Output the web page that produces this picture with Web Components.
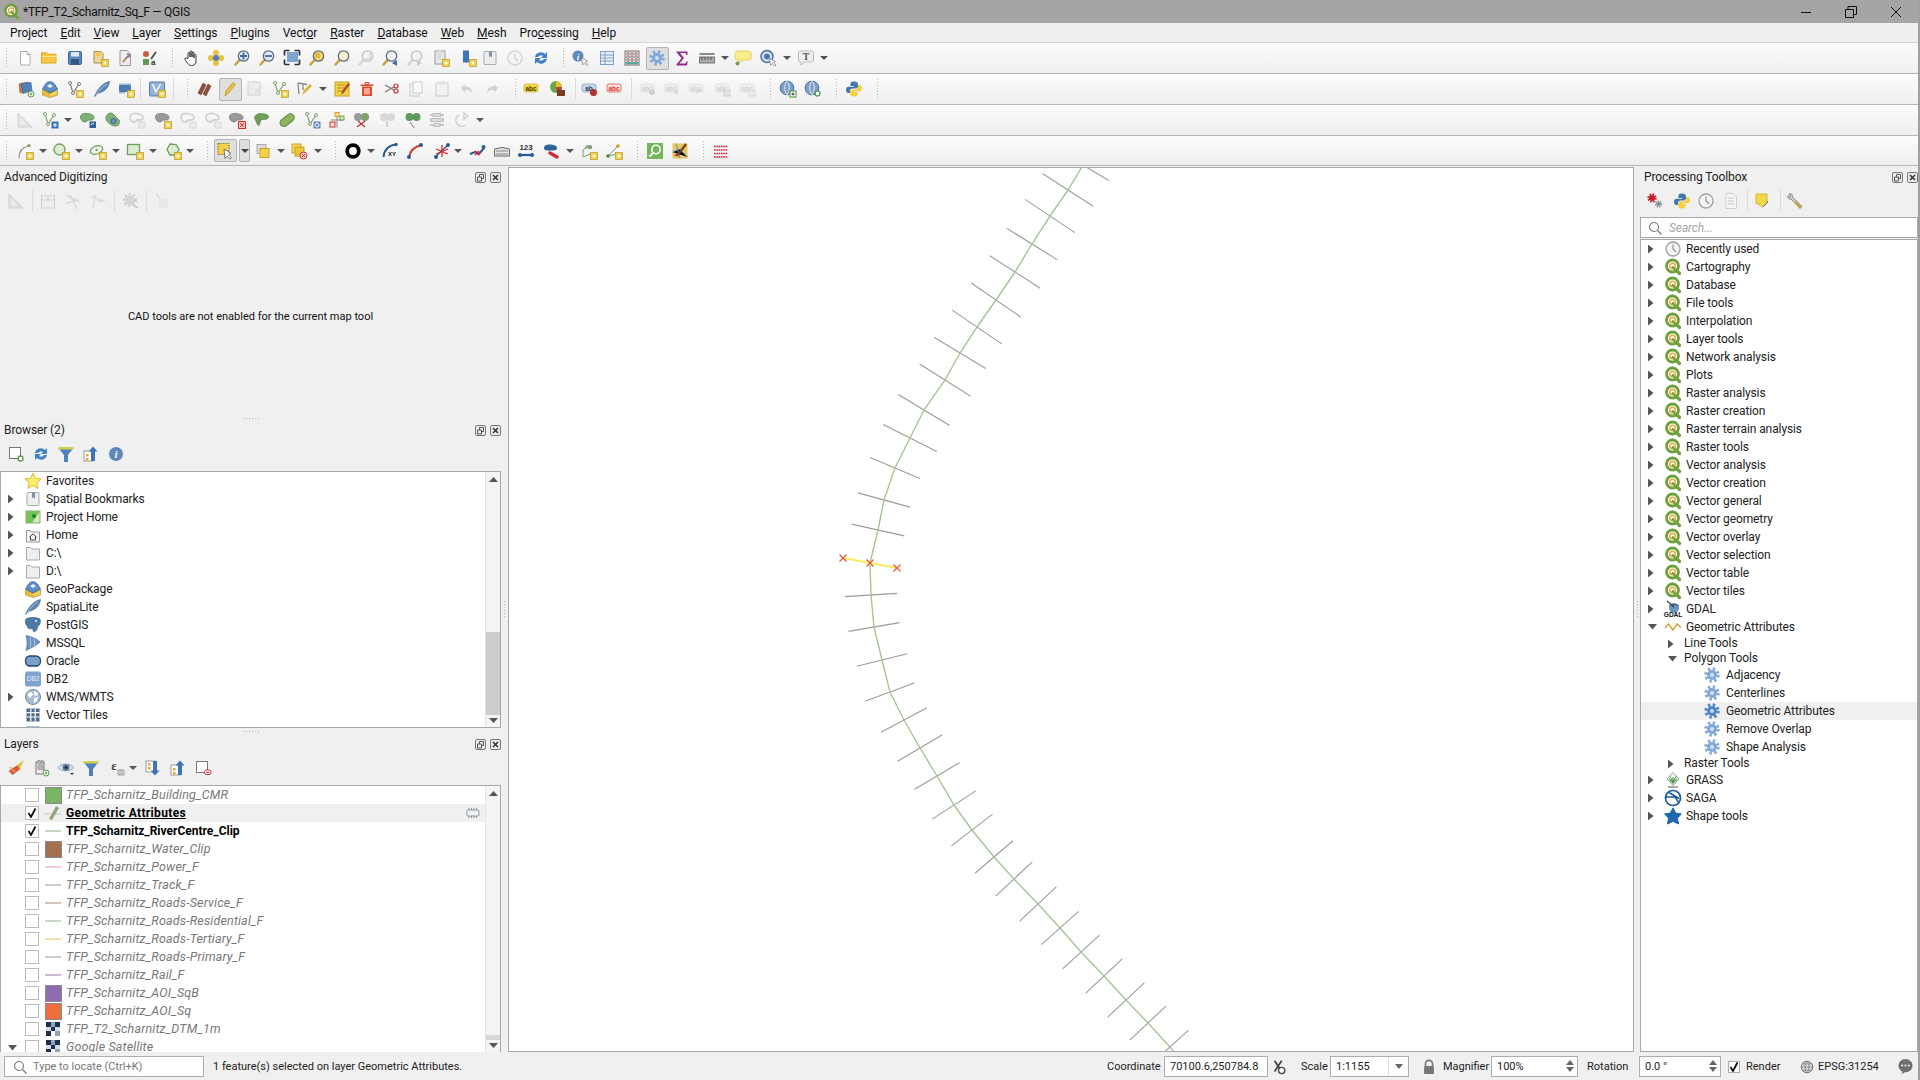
<!DOCTYPE html>
<html>
<head>
<meta charset="utf-8">
<title>QGIS</title>
<style>
  html, body { margin: 0; padding: 0; }
  body {
    width: 1920px; height: 1080px; overflow: hidden; box-sizing: border-box;
    border-right: 2px solid #a0a0a0; background: #f0f0f0; color: #111;
    display: flex; flex-direction: column;
    font: 12px/18px Roboto, "Noto Sans", sans-serif; letter-spacing: -.1px;
  }
  .main { display: flex; height: 886px; }
  .left { width: 501px; display: flex; flex-direction: column; }
  .right { width: 278px; display: flex; flex-direction: column; }
</style>
</head>
<body>
<q-titlebar>*TFP_T2_Scharnitz_Sq_F — QGIS</q-titlebar>
<q-menubar>
  <span>Pro<u>j</u>ect</span><span><u>E</u>dit</span><span><u>V</u>iew</span><span><u>L</u>ayer</span><span><u>S</u>ettings</span><span><u>P</u>lugins</span><span>Vect<u>o</u>r</span><span><u>R</u>aster</span><span><u>D</u>atabase</span><span><u>W</u>eb</span><span><u>M</u>esh</span><span>Pro<u>c</u>essing</span><span><u>H</u>elp</span>
</q-menubar>
<q-toolbar items="grip@6 new@25 open@49 save@75 saveas@100 props@125 style@150 grip@172 hand@191 pansel@216 zoomin@242 zoomout@267 zoomfull@292 zoomlayer@317 zoomsel@342 zoomlast!@366 zoomback@390 zoomnat!@415 bmkgroup@441 bmknew@468 bmk@490 clock!@515 refresh@541 grip@563 identify@580 table@607 calc@632 gear*@657 sigma@682 measure@707 drop@725 tip@743 findloc@768 drop@787 ttext@806 drop@824"></q-toolbar>
<q-toolbar items="grip@6 layers@26 gpkg@50 vnew@75 featherb@102 chip@126 sep@140 virt@157 sep@173 grip@187 pens@205 pencil*@230 savepen!@255 vadd@280 vtool@305 drop@323 note@342 trash@367 scissors@392 copy!@416 paste!@442 undo!@467 redo!@492 grip@515 abcy@532 pie@558 sep@575 abcpin@590 abcr@615 sep@631 abcg1!@648 abcg2!@672 abcg3!@697 abcg4!@723 abcg5!@748 grip@770 globeadd@788 globefind@813 grip@836 python@854 grip@877"></q-toolbar>
<q-toolbar items="grip@6 ruler!@25 vmove@50 drop@68 gblob1@88 gblob2@113 ring!@137 gblob3@163 ring!@188 ring!@213 rblob@237 gfill@262 pill@287 vcopy@312 split@337 rsplit@362 gsplit!@388 merge@413 align@437 redo2!@463 drop@480"></q-toolbar>
<q-toolbar style="height:29px" items="grip@6 curve@25 drop@43 circ@61 drop@79 ellipse@98 drop@116 rect@135 drop@153 regpoly@173 drop@190 grip@207 select*@225 dropb@244 selvals@263 drop@281 deselect@299 drop@318 grip@335 ringblack@353 drop@371 arcxy@390 arcred@415 cross@442 drop@458 splitred@477 road@502 n123@526 reshape@552 drop@570 labeln@589 labelm@614 grip@637 mapsearch@655 osm@680 grip@703 dash@721"></q-toolbar>

<div class="main">
  <div class="left">
    <q-dock-title style="height:21px;padding-top:1px">Advanced Digitizing</q-dock-title>
    <q-toolbar flat items="ruler!@16 sep@32 cadbox!@48 cadlines!@72 cadang!@98 sep@114 cadgear!@131 sep@146 cadpt!@162"></q-toolbar>
    <q-message>CAD tools are not enabled for the current map tool</q-message>
    <q-handle h="4"></q-handle>
    <q-dock-title style="height:21px">Browser (2)</q-dock-title>
    <q-toolbar flat items="addsq@16 refresh@41 funnel@66 collapse@91 info@116"></q-toolbar>
    <q-tree style="height:257px;margin-top:4px" thumb-top="160" thumb-height="83" thumb-tone="dark">
      <q-row text="45" icon="star">Favorites</q-row>
      <q-row text="45" arrow="right" icon="bmk">Spatial Bookmarks</q-row>
      <q-row text="45" arrow="right" icon="prjhome">Project Home</q-row>
      <q-row text="45" arrow="right" icon="home">Home</q-row>
      <q-row text="45" arrow="right" icon="folder">C:\</q-row>
      <q-row text="45" arrow="right" icon="folder">D:\</q-row>
      <q-row text="45" icon="gpkg">GeoPackage</q-row>
      <q-row text="45" icon="featherb">SpatiaLite</q-row>
      <q-row text="45" icon="elephant">PostGIS</q-row>
      <q-row text="45" icon="mssql">MSSQL</q-row>
      <q-row text="45" icon="oracle">Oracle</q-row>
      <q-row text="45" icon="db2">DB2</q-row>
      <q-row text="45" arrow="right" icon="wms">WMS/WMTS</q-row>
      <q-row text="45" icon="grid">Vector Tiles</q-row>
      <q-row text="45" icon="grid"></q-row>
    </q-tree>
    <q-handle h="6"></q-handle>
    <q-dock-title style="height:21px">Layers</q-dock-title>
    <q-toolbar flat items="styles@16 addgroup@41 eye@66 funnel@91 epsilon@117 drop@133 expand@153 collapse@178 remove@203"></q-toolbar>
    <q-tree style="height:268px;margin-top:4px" thumb-top="249" thumb-height="5" thumb-tone="line">
      <q-layer swatch="#79b564" off>TFP_Scharnitz_Building_CMR</q-layer>
      <q-layer line="#8db26a" on selected indicator current>Geometric Attributes</q-layer>
      <q-layer line="#c5d8ba" on>TFP_Scharnitz_RiverCentre_Clip</q-layer>
      <q-layer swatch="#a3714f" off>TFP_Scharnitz_Water_Clip</q-layer>
      <q-layer line="#f2cdd7" off>TFP_Scharnitz_Power_F</q-layer>
      <q-layer line="#cfcbd4" off>TFP_Scharnitz_Track_F</q-layer>
      <q-layer line="#d6bfbb" off>TFP_Scharnitz_Roads-Service_F</q-layer>
      <q-layer line="#c7dac6" off>TFP_Scharnitz_Roads-Residential_F</q-layer>
      <q-layer line="#f0e2a8" off>TFP_Scharnitz_Roads-Tertiary_F</q-layer>
      <q-layer line="#c9ced5" off>TFP_Scharnitz_Roads-Primary_F</q-layer>
      <q-layer line="#cbbbd2" off>TFP_Scharnitz_Rail_F</q-layer>
      <q-layer swatch="#8f6bb0" off>TFP_Scharnitz_AOI_SqB</q-layer>
      <q-layer swatch="#ec6e3d" off>TFP_Scharnitz_AOI_Sq</q-layer>
      <q-layer raster off>TFP_T2_Scharnitz_DTM_1m</q-layer>
      <q-layer raster off expanded>Google Satellite</q-layer>
    </q-tree>
  </div>
  <q-vhandle></q-vhandle>
  <q-map></q-map>
  <q-vhandle style="width:6px"></q-vhandle>
  <div class="right">
    <q-dock-title edge style="height:21px;padding-top:1px">Processing Toolbox</q-dock-title>
    <q-toolbar flat items="procmodel@15 python@42 clock@66 doc!@91 sep@107 tag@123 sep@140 wrench@155"></q-toolbar>
    <q-search>Search...</q-search>
    <q-tree noscroll style="height:813px;width:278px">
      <q-row pad="11" text="45" arrow="right" icon="clock">Recently used</q-row>
      <q-row pad="11" text="45" arrow="right" icon="q">Cartography</q-row>
      <q-row pad="11" text="45" arrow="right" icon="q">Database</q-row>
      <q-row pad="11" text="45" arrow="right" icon="q">File tools</q-row>
      <q-row pad="11" text="45" arrow="right" icon="q">Interpolation</q-row>
      <q-row pad="11" text="45" arrow="right" icon="q">Layer tools</q-row>
      <q-row pad="11" text="45" arrow="right" icon="q">Network analysis</q-row>
      <q-row pad="11" text="45" arrow="right" icon="q">Plots</q-row>
      <q-row pad="11" text="45" arrow="right" icon="q">Raster analysis</q-row>
      <q-row pad="11" text="45" arrow="right" icon="q">Raster creation</q-row>
      <q-row pad="11" text="45" arrow="right" icon="q">Raster terrain analysis</q-row>
      <q-row pad="11" text="45" arrow="right" icon="q">Raster tools</q-row>
      <q-row pad="11" text="45" arrow="right" icon="q">Vector analysis</q-row>
      <q-row pad="11" text="45" arrow="right" icon="q">Vector creation</q-row>
      <q-row pad="11" text="45" arrow="right" icon="q">Vector general</q-row>
      <q-row pad="11" text="45" arrow="right" icon="q">Vector geometry</q-row>
      <q-row pad="11" text="45" arrow="right" icon="q">Vector overlay</q-row>
      <q-row pad="11" text="45" arrow="right" icon="q">Vector selection</q-row>
      <q-row pad="11" text="45" arrow="right" icon="q">Vector table</q-row>
      <q-row pad="11" text="45" arrow="right" icon="q">Vector tiles</q-row>
      <q-row pad="11" text="45" arrow="right" icon="gdal">GDAL</q-row>
      <q-row pad="11" text="45" arrow="down" icon="wave">Geometric Attributes</q-row>
      <q-row h="15" pad="31" text="43" arrow="right">Line Tools</q-row>
      <q-row h="15" pad="31" text="43" arrow="down">Polygon Tools</q-row>
      <q-row pad="71" text="85" icon="gear">Adjacency</q-row>
      <q-row pad="71" text="85" icon="gear">Centerlines</q-row>
      <q-row pad="71" text="85" icon="gearsel" selected>Geometric Attributes</q-row>
      <q-row pad="71" text="85" icon="gear">Remove Overlap</q-row>
      <q-row pad="71" text="85" icon="gear">Shape Analysis</q-row>
      <q-row h="15" pad="31" text="43" arrow="right">Raster Tools</q-row>
      <q-row pad="11" text="45" arrow="right" icon="grass">GRASS</q-row>
      <q-row pad="11" text="45" arrow="right" icon="saga">SAGA</q-row>
      <q-row pad="11" text="45" arrow="right" icon="shapes">Shape tools</q-row>
    </q-tree>
  </div>
</div>

<q-statusbar></q-statusbar>

<script>
const BADGE = '<rect x="10.5" y="10.5" width="7" height="7" fill="#f3d24a" stroke="#b8982e" stroke-width=".7"/><path d="M14 11.8l.6 1.4 1.5.1-1.1 1 .3 1.4-1.3-.7-1.3.7.3-1.4-1.1-1 1.5-.1z" fill="#fff"/>'
const mag = (fill, extra = '') => `<path d="M6.5 11L2.5 15.5" stroke="#c8a03a" stroke-width="2.4" stroke-linecap="round"/><circle cx="10.5" cy="7" r="5.2" fill="${fill}" stroke="#5d6d7d" stroke-width="1.3"/>${extra}`
const vee = (c) => `<path d="M4 3l3 10 6-9" fill="none" stroke="${c}" stroke-width="1.1"/><circle cx="4" cy="3" r="1.5" fill="#fff" stroke="${c}"/><circle cx="7" cy="13" r="1.5" fill="#fff" stroke="${c}"/><circle cx="13" cy="4" r="1.5" fill="#fff" stroke="${c}"/>`
const blob = (c, s) => `<path d="M1.5 6c0-3 3.5-4 6.5-3.5s7 1 7 4-3 2.5-5 2.5-2 2-4 2-4.5-2-4.5-5z" fill="${c}" stroke="${s}" stroke-width=".8"/>`
const ringb = '<path d="M2 6c0-3 3.5-4 6.5-3.5s6.5 1 6.5 4-3 2.5-5 2.5-2 2-4 2-4-2-4-5z" fill="none" stroke="#999" stroke-width="1.8"/><rect x="11" y="11" width="6" height="6" fill="#ddd" stroke="#aaa"/>'
const abc = (bg, bd, fg, txt = 'abc') => `<rect x="1" y="4" width="14" height="8" rx="2" fill="${bg}" stroke="${bd}" stroke-width=".8"/><text x="8" y="10.6" font-size="6.5" font-weight="700" text-anchor="middle" font-family="Liberation Sans" fill="${fg}">${txt}</text>`
const abcg = (extra) => abc('#e4e4e4', '#bbb', '#999') + extra
const page = '<path d="M4 1.5h7l3.5 3.5v11.5H4z" fill="#fff" stroke="#999"/>'
const globe = (extra) => `<circle cx="8" cy="8" r="6.8" fill="#7b9fc8" stroke="#456a94"/><path d="M8 1.2c-3 3-3 10 0 13.6M8 1.2c3 3 3 10 0 13.6" fill="none" stroke="#e8eef5"/>${extra}`

const ICONS = {
  new: '<path d="M4.5 2.5H11l3 3V16H4.5z" fill="#fff" stroke="#aaa"/><path d="M11 2.5v3h3" fill="#eee" stroke="#aaa"/>',
  open: '<path d="M1.5 5V3.800h5L8 5.200h8V14H1.5z" fill="#f6c945" stroke="#dba726"/><path d="M1.5 7.5h15" stroke="#fbe08d"/>',
  save: '<rect x="2.5" y="2.5" width="13" height="13" rx="1.5" fill="#5d88bd" stroke="#3f6a9e"/><rect x="5" y="3" width="8" height="4.5" fill="#dfe8f2"/><rect x="5" y="10" width="8" height="5.5" fill="#34577f"/>',
  saveas: '<path d="M3 2.5h7l2 2V14H3z" fill="#ead99f" stroke="#a98f49"/><rect x="5" y="4" width="4" height="3" fill="#f7c23a"/>' + BADGE,
  props: page.replace('#fff', '#eee') + '<path d="M7 13l5-6M11 5l2.5 1-1 2.5" stroke="#777" stroke-width="1.5" fill="none"/><path d="M7 13l2-3" stroke="#c9a33a" stroke-width="2"/>',
  style: '<circle cx="5" cy="5" r="3" fill="#d05a3c"/><rect x="2" y="10" width="6" height="6" fill="#5d9b55"/><path d="M10 10l5-7" stroke="#555" stroke-width="2"/><text x="10" y="16" font-size="8" font-family="Liberation Sans" fill="#333">a</text>',
  hand: '<path d="M6 9.5v-5a1 1 0 012 0V8 3a1 1 0 012 0v5-4a1 1 0 012 0v5-2.5a1 1 0 012 0V12c0 3-1.8 4.5-4.5 4.5-2.5 0-3.5-1.5-4.5-3L3 10.5c-.7-1.200.9-2.200 1.800-1.200z" fill="#fff" stroke="#222" stroke-width=".9"/>',
  pansel: '<circle cx="9" cy="4" r="3" fill="#e7c23c"/><circle cx="9" cy="14" r="3" fill="#e7c23c"/><circle cx="4" cy="9" r="3" fill="#e7c23c"/><circle cx="14" cy="9" r="3" fill="#e7c23c"/><circle cx="9" cy="9" r="3" fill="#4f7fb4"/>',
  zoomin: mag('#dfe8f2', '<path d="M10.5 3.500v7M7 7h7" stroke="#3c6aa5" stroke-width="1.8"/>'),
  zoomout: mag('#dfe8f2', '<path d="M7 7h7" stroke="#3c6aa5" stroke-width="1.8"/>'),
  zoomfull: '<rect x="4" y="3" width="11" height="10" fill="#7fa3cf"/><path d="M1.500 1.500h5M1.500 1.500v5M16.500 1.500h-5M16.500 1.500v5M1.500 15.500h5M1.500 15.500v-5M16.500 15.500h-5M16.500 15.500v-5" stroke="#2a3440" stroke-width="1.7"/>',
  zoomlayer: mag('#f0d672', '<path d="M7 4h5v5H7z" fill="#e4b93a"/>'),
  zoomsel: mag('#f6f0ce'),
  zoomlast: mag('#eee', '<path d="M13 4v6H8" fill="none" stroke="#888"/>'),
  zoomback: mag('#eef2f7', '<path d="M16 11l-5 3 5 3z" fill="#3c6aa5"/>'),
  zoomnat: mag('#eee', '<path d="M11 11l5 3-5 3z" fill="#888"/>'),
  bmkgroup: '<rect x="3" y="2" width="10" height="13" fill="#e9e9e9" stroke="#999"/><path d="M5 2h5v9H5z" fill="#ddd"/>' + BADGE,
  bmknew: '<path d="M4 1.500h6v12H4z" fill="#3f73b5"/>' + BADGE,
  bmk: '<rect x="3" y="2.5" width="12" height="13" rx="1" fill="#eee" stroke="#aaa"/><path d="M8 2.500h3v6L9.500 7 8 8.500z" fill="#7c90a9"/>',
  clock: '<circle cx="9" cy="9" r="7" fill="#f4f4f4" stroke="#a0a0a0" stroke-width="1.3"/><path d="M9 4.500V9l3 3" fill="none" stroke="#8f8f8f" stroke-width="1.2"/>',
  refresh: '<path d="M3 8a6 6 0 0110-3l2-2v6H9l2-2a3.500 3.500 0 00-5 1zM15 10a6 6 0 01-10 3l-2 2V9h6l-2 2a3.500 3.500 0 005-1z" fill="#3f80c6"/>',
  identify: '<circle cx="7" cy="7" r="5.5" fill="#5c88ba"/><text x="7" y="10.6" font-size="9" font-weight="700" font-style="italic" text-anchor="middle" font-family="Liberation Serif" fill="#fff">i</text><path d="M10.500 9l1 7 1.800-2 2.700 2.500 1-1-2.500-2.500 2-1z" fill="#fff" stroke="#777" stroke-width=".7"/>',
  table: '<rect x="2.5" y="2.5" width="13" height="13" fill="#e9f0f8" stroke="#7fa0c5"/><path d="M2.500 6h13M2.500 9h13M2.500 12h13M7 2.500v13" stroke="#7fa0c5"/>',
  calc: '<rect x="2" y="2" width="14" height="14" fill="#ddd" stroke="#777"/><path d="M3 5h12M3 8h12M3 11h12" stroke="#888"/><path d="M5 3v11M9 3v11M13 3v11" stroke="#c44" stroke-dasharray="1.5 1.5"/><path d="M3 14h12" stroke="#5a9" stroke-width="2"/>',
  gear: '<circle cx="9" cy="9" r="6.2" fill="none" stroke="#7fa7d8" stroke-width="3" stroke-dasharray="2.4 2.47"/><circle cx="9" cy="9" r="5" fill="#7fa7d8"/><circle cx="9" cy="9" r="2" fill="#d6e2f2"/>',
  gearsel: '<circle cx="9" cy="9" r="6.2" fill="none" stroke="#4f84c6" stroke-width="3" stroke-dasharray="2.4 2.47"/><circle cx="9" cy="9" r="5" fill="#4f84c6"/><circle cx="9" cy="9" r="2" fill="#c7d9ef"/>',
  sigma: '<path d="M3.500 2.500h11V6h-1l-1-2H7l4 5-4.500 5.500h6l1.200-2.300h1L14 16.500H3.500v-1l5-6.200-5-6z" fill="#93278f"/>',
  measure: '<path d="M1.500 5h15" stroke="#666" stroke-width="1.5"/><rect x="1.5" y="8" width="15" height="6" fill="#aaa" stroke="#777"/><path d="M4 8v3M7 8v3M10 8v3M13 8v3" stroke="#555"/>',
  tip: '<path d="M3.500 2h11A2.500 2.500 0 0117 4.500v4a2.500 2.500 0 01-2.500 2.500H9l-4 3v-3H3.500A2.500 2.500 0 011 8.500v-4A2.500 2.500 0 013.500 2z" fill="#fbee8a" stroke="#e1d26b"/><circle cx="3.5" cy="14.5" r="2" fill="#7b9a53"/>',
  findloc: '<circle cx="8" cy="7.5" r="6" fill="#cfdbe9" stroke="#4f709b" stroke-width="1.5"/><circle cx="8" cy="7.5" r="2.8" fill="#3e75b3"/><path d="M10.500 9.500l1 7 1.800-2 2.700 2.500 1-1-2.500-2.500 2-1z" fill="#fff" stroke="#777" stroke-width=".7"/>',
  ttext: '<path d="M3.500 2h11a2 2 0 012 2v7a2 2 0 01-2 2H8l-4 3v-3h-.5a2 2 0 01-2-2V4a2 2 0 012-2z" fill="#eee" stroke="#bbb"/><text x="9" y="11" font-size="10" font-weight="700" text-anchor="middle" font-family="Liberation Serif" fill="#555">T</text>',
  layers: '<path d="M2 4l9-2 1 9-9 2z" fill="#d9783a" stroke="#a2521f" stroke-width=".6"/><path d="M4 3.500l10-1 1 8-9 3z" fill="#4f7fb4" stroke="#345f90" stroke-width=".6"/><circle cx="14" cy="14" r="3" fill="#fff" stroke="#5a9a4a"/><path d="M12.500 14h3M14 12.500v3" stroke="#5a9a4a"/>',
  gpkg: '<path d="M1.500 9.500L9 13l7.500-3.500V15L9 17.500 1.500 15z" fill="#f2cf55" stroke="#927a22" stroke-width=".6"/><path d="M1.500 9.500L9 13v4.500L1.500 15z" fill="#e8b83a"/><path d="M1.500 9l3-5a5.500 5.500 0 019 0l3 5L9 13z" fill="#5d8fc4" stroke="#2e5a8c" stroke-width=".7"/><path d="M6 6l3-2 3 2-3 2z" fill="#e9eef5"/>',
  vnew: vee('#777') + BADGE,
  featherb: '<path d="M1.500 16.500C4 10 9 3 16.500 1.500 16 7 12 12 5.500 13z" fill="#5c88ba" stroke="#3a618e" stroke-width=".6"/><path d="M3 15C6 10 10 6 14 4" stroke="#d5e2f0" stroke-width=".6" fill="none"/>',
  chip: '<rect x="2" y="5" width="12" height="7" rx="1" fill="#4b7db4"/><path d="M3 3.500v2M5 3.500v2M7 3.500v2M9 3.500v2M11 3.500v2M13 3.500v2M3 12v1.500M5 12v1.500M7 12v1.500" stroke="#4b7db4"/>' + BADGE,
  virt: '<rect x="1.5" y="2" width="15" height="14" rx="1" fill="#94b3d6" stroke="#557ca8"/><path d="M4.500 4L8 12l4.500-8" fill="none" stroke="#fff" stroke-width="1.3"/>' + BADGE,
  pens: '<path d="M2 13L7 3l3 2-5 10zM7 14l5-10 3 2-5 10z" fill="#8f4f3c" stroke="#5c3022" stroke-width=".5"/>',
  pencil: '<path d="M4 16l1-5 7-8.500 2.500 2L7.500 13z" fill="#e8c23a" stroke="#b48f1f" stroke-width=".7"/>',
  savepen: '<rect x="2" y="2" width="12" height="13" fill="#ddd" stroke="#999"/><path d="M8 15l1-4 6-5 1.500 1.500-6 5z" fill="#bbb"/>',
  vadd: vee('#7d9e6a') + BADGE,
  vtool: '<path d="M2 3l9 1.500M2 3l1 11M7 4v6" stroke="#888" stroke-width="1.3" fill="none"/><path d="M6 15l2-5 6-6 2 2-6 6z" fill="#d9b43a"/>',
  note: '<rect x="2" y="2" width="14" height="14" fill="#f3d24a" stroke="#c7a224"/><path d="M4 5h8M4 8h8M4 11h5" stroke="#b08f1d"/><path d="M8 15l1-4 6-8 2 1.500-6 8z" fill="#c0432d"/>',
  trash: '<path d="M2.500 4.500h13V6h-13z" fill="#e04b2b"/><path d="M7 2.500h4v2H7z" fill="none" stroke="#e04b2b"/><path d="M4 6.500h10V16H4z" fill="#e04b2b"/><path d="M7 8v6.500M9 8v6.500M11 8v6.500" stroke="#fff"/>',
  scissors: '<path d="M2 5l9 5M2 12l9-5" stroke="#777" stroke-width="1.2"/><circle cx="13" cy="6" r="2" fill="none" stroke="#c23b32" stroke-width="1.2"/><circle cx="13" cy="11" r="2" fill="none" stroke="#c23b32" stroke-width="1.2"/>',
  copy: '<rect x="3" y="4" width="9" height="12" fill="#eee" stroke="#888"/><rect x="6" y="2" width="9" height="11" fill="#fff" stroke="#888"/>',
  paste: '<rect x="3" y="3" width="12" height="13" fill="#eee" stroke="#888"/><rect x="6" y="1.5" width="6" height="3" fill="#bbb"/>',
  undo: '<path d="M3 8l4-4v2.500c4 0 7 1.500 7 6.500-1.500-2.500-3.500-3-7-3V13z" fill="#999"/>',
  redo: '<path d="M15 8l-4-4v2.500c-4 0-7 1.500-7 6.500 1.500-2.500 3.500-3 7-3V13z" fill="#999"/>',
  abcy: abc('#f5d84a', '#d4b62f', '#443a00'),
  pie: '<circle cx="7" cy="7" r="6" fill="#6aa84f"/><path d="M7 7V1a6 6 0 016 6z" fill="#e8c12d"/><path d="M7 7h6a6 6 0 01-5 6z" fill="#c23b32"/><rect x="8" y="10" width="8" height="6" fill="#7a3b1e"/>',
  abcpin: abc('#c7d6e9', '#88a3c4', '#26405f', 'ab') + '<circle cx="12.5" cy="12.5" r="3.5" fill="#b5302b"/>',
  abcr: abc('#fbe4df', '#df5a50', '#d0352c'),
  abcg1: abcg('<circle cx="13" cy="12" r="3" fill="#999"/>'),
  abcg2: abcg('<path d="M11 10h4v4h-4z" fill="#aaa"/>'),
  abcg3: abcg('<path d="M9 13a3 3 0 015-2" stroke="#999" stroke-width="1.5" fill="none"/>'),
  abcg4: abcg('<rect x="10" y="10" width="6" height="6" fill="#ccc" stroke="#999"/>'),
  abcg5: abcg('<rect x="10" y="10" width="6" height="6" fill="#ddd" stroke="#aaa"/>'),
  globeadd: globe('<rect x="11" y="11" width="6" height="6" fill="#fff" stroke="#4a8a3a"/><path d="M12.500 14h3M14 12.500v3" stroke="#333"/>'),
  globefind: globe('<circle cx="13.5" cy="13.5" r="2.5" fill="#fff" stroke="#4a8a3a" stroke-width="1.2"/>'),
  python: '<path d="M9 1.500c-3.500 0-3.500 1.500-3.500 3V6H9v.7H3.500C1.500 6.700 1 8.500 1 10s.8 3 2.300 3H5v-2c0-1.500 1-2.500 2.500-2.500h3.300c1.300 0 2.200-1 2.200-2.200V4c0-1.500-1.500-2.500-4-2.500z" fill="#3f79ad"/><path d="M9.200 16.500c3.500 0 3.500-1.500 3.500-3V12H9.200v-.7h5.300c2 0 2.500-1.800 2.500-3.300s-.8-3-2.300-3H13v2c0 1.500-1 2.500-2.500 2.500H7.300c-1.300 0-2.200 1-2.200 2.200V14c0 1.500 1.600 2.500 4.100 2.500z" fill="#f5cf3f"/>',
  ruler: '<path d="M2 2l14 14H2z" fill="#ccc" stroke="#999"/><path d="M5 9l4 4H5z" fill="#f0f0f0"/>',
  vmove: vee('#7d9e6a') + '<rect x="10.5" y="10.5" width="7" height="7" fill="#3b74b2"/><path d="M14 12v4M12 14h4" stroke="#fff"/>',
  gblob1: blob('#7fb07a', '#4f8049') + '<rect x="10.5" y="10.5" width="6.5" height="6.5" fill="#2f5f96"/><path d="M12 14a2 2 0 013-1" stroke="#fff" fill="none"/>',
  gblob2: '<path d="M2 6c1-4 5-5 7-3l6 6c2 3-1 7-5 6C6 14 1 10 2 6z" fill="#7fb07a" stroke="#4f8049" stroke-width=".7"/><circle cx="9.5" cy="10" r="2.5" fill="#6d94c0" stroke="#345f90"/>',
  ring: ringb,
  gblob3: blob('#9a9a9a', '#777') + BADGE,
  rblob: blob('#9a9a9a', '#777') + '<rect x="10.5" y="10.5" width="7" height="7" fill="#f1c5c2" stroke="#c33"/><path d="M12 12l4 4M16 12l-4 4" stroke="#c33"/>',
  gfill: '<path d="M1.500 7c0-3 4-5 7-4.500s7 .5 7 3.500c0 2-3 2.500-5 2.500-1.500 0-2.500 0-3 1.500L6.500 14c-.5 1-2 .5-2.500-1.500z" fill="#6f9e57" stroke="#4f7a3a" stroke-width=".6"/>',
  pill: '<rect x="1" y="5.5" width="16" height="7.5" rx="3.7" transform="rotate(-38 9 9)" fill="#8fb35f" stroke="#5f8436"/>',
  vcopy: vee('#7d9e6a') + '<rect x="10.5" y="10.5" width="7" height="7" fill="#5d88bd"/><circle cx="14" cy="14" r="2" fill="none" stroke="#fff"/>',
  split: '<path d="M9 1.500v15M3 9h12" stroke="#888"/><rect x="7" y="1.5" width="4" height="4" fill="#fbe6a0" stroke="#d79d27"/><rect x="12" y="5" width="4" height="4" fill="#d9edc3" stroke="#6a9e3a"/><rect x="2" y="11" width="5" height="5" fill="#fde0dd" stroke="#c33"/>',
  rsplit: '<circle cx="5" cy="6" r="4" fill="#999"/><circle cx="12" cy="6" r="4" fill="#7f9f6f"/><path d="M4 16l8-6M12 16l-7-6" stroke="#b33" stroke-width="1.3"/>',
  gsplit: '<circle cx="5" cy="6" r="4" fill="#aaa"/><circle cx="12" cy="6" r="4" fill="#aaa"/><path d="M8 10v6" stroke="#999" stroke-width="2"/>',
  merge: '<circle cx="5.5" cy="6" r="4" fill="#5f9a5f"/><circle cx="12.5" cy="6" r="4" fill="#5f9a5f"/><path d="M6 11l4 6" stroke="#777" fill="none"/>',
  align: '<path d="M2 4h14M2 9h14M2 14h14" stroke="#999"/><path d="M5 2.500h8v3H5zM3 7.500h12v3H3zM6 12.500h6v3H6z" fill="#ddd" stroke="#aaa" stroke-width=".7"/>',
  redo2: '<path d="M5 4a6 6 0 106.500 10M10 2l4 3-4 3z" fill="none" stroke="#999" stroke-width="1.5"/>',
  curve: '<path d="M3 16c0-7 4-11 10-12" fill="none" stroke="#888" stroke-width="1.2"/><circle cx="13" cy="3.5" r="1.5" fill="#6d9e5a"/>' + BADGE,
  circ: '<circle cx="7.5" cy="7.5" r="5.5" fill="#dcebd2" stroke="#6d9e5a" stroke-width="1.3"/>' + BADGE,
  ellipse: '<ellipse cx="7.5" cy="8" rx="6.5" ry="4" transform="rotate(-20 7.5 8)" fill="#eaf2e3" stroke="#6d9e5a" stroke-width="1.2"/><circle cx="7.5" cy="8" r="1" fill="#777"/>' + BADGE,
  rect: '<rect x="1.5" y="2.5" width="12" height="10" fill="#dcebd2" stroke="#6d9e5a" stroke-width="1.3"/>' + BADGE,
  regpoly: '<path d="M6 2l6 .5 3 5-3 5.500H6L3 7.500z" fill="#dcebd2" stroke="#6d9e5a" stroke-width="1.3"/>' + BADGE,
  select: '<rect x="2" y="1.5" width="11" height="11" fill="#f5d04a" stroke="#8a7a20" stroke-width="1.1" stroke-dasharray="1.5 1"/><path d="M8 7l1 9.500 2-2.300 3 3 1.500-1.500-3-2.800 2.500-1.500z" fill="#fff" stroke="#555" stroke-width=".8"/>',
  selvals: '<rect x="3" y="2.5" width="9" height="9" fill="#ddd" stroke="#aaa"/><rect x="6" y="6.5" width="9" height="9" fill="#f4d24a" stroke="#c8a22c"/>',
  deselect: '<rect x="2" y="2" width="9" height="9" fill="#f7d65a" stroke="#caa42c"/><rect x="5" y="5" width="9" height="9" fill="#f0c23c" stroke="#caa42c"/><circle cx="13.5" cy="13.5" r="3.5" fill="#f4d2d0" stroke="#c33"/><path d="M12 12l3 3M15 12l-3 3" stroke="#c33"/>',
  ringblack: '<circle cx="9" cy="9" r="5.8" fill="#fff" stroke="#000" stroke-width="3.8"/>',
  arcxy: '<path d="M2.500 15C3 8 8 3 15 2.500" fill="none" stroke="#2a5a8f" stroke-width="2"/><circle cx="15" cy="2.5" r="1.7" fill="#2a5a8f"/><text x="11" y="14" font-size="6" font-weight="700" text-anchor="middle" font-family="Liberation Sans" fill="#111">XY</text>',
  arcred: '<path d="M3 15C4 9 8 5 15 3" fill="none" stroke="#cf3a2d" stroke-width="2"/><circle cx="3" cy="15" r="2" fill="#2a5a8f"/><circle cx="15" cy="3" r="2" fill="#2a5a8f"/>',
  cross: '<path d="M2 15L15 3" stroke="#2a5a8f" stroke-width="1.5"/><circle cx="3" cy="15" r="2" fill="#2a5a8f"/><circle cx="15" cy="3" r="2" fill="#2a5a8f"/><path d="M9 3v12M3 7l12 5M3 12l12-5" stroke="#d22" stroke-width="1.3"/>',
  splitred: '<path d="M2 12l5-2 4 2 5-6" stroke="#2a5a8f" stroke-width="2" fill="none"/><path d="M7 9l4 4M11 9l-4 4" stroke="#d22" stroke-width="1.5"/><circle cx="15.5" cy="5" r="2" fill="#2a5a8f"/>',
  road: '<path d="M1.500 7q7.500-3 15 0v7h-15z" fill="#e4e4e4" stroke="#666"/><path d="M3 9h12M3 12h12" stroke="#888"/>',
  n123: '<text x="9" y="8" font-size="8" font-weight="700" text-anchor="middle" font-family="Liberation Sans" fill="#333">123</text><path d="M2 13h14" stroke="#2a5a8f" stroke-width="2.2"/><circle cx="3" cy="13" r="2" fill="#2a5a8f"/><circle cx="15" cy="13" r="2" fill="#2a5a8f"/>',
  reshape: '<path d="M1 6c0-3 4-4 7-3.500s6 1 6 3.500-3 2.500-5 2.500-8 1-8-2.500z" fill="#2f6499"/><path d="M7 11l7 4" stroke="#d22f2f" stroke-width="3.5" stroke-linecap="round"/>',
  labeln: '<path d="M3 15l7-3M3 15V8l4-3" stroke="#7d9e6a" fill="none"/><text x="5" y="7" font-size="6" fill="#777" font-family="Liberation Sans">Az</text><circle cx="10" cy="5" r="2" fill="#7d9e6a"/>' + BADGE,
  labelm: '<path d="M3 14L13 4M3 14l9-2" stroke="#7d9e6a" fill="none"/><circle cx="3" cy="14" r="1.8" fill="#5b7a48"/><circle cx="13" cy="4" r="1.8" fill="#c89a2c"/>' + BADGE,
  mapsearch: '<rect x="1" y="1" width="16" height="16" fill="#74b55d"/><circle cx="10" cy="7.5" r="4.2" fill="none" stroke="#fff" stroke-width="1.5"/><path d="M7 11l-3.500 3.500" stroke="#fff" stroke-width="2"/>',
  osm: '<rect x="1.5" y="1.5" width="15" height="15" fill="#e8c85a"/><path d="M1.500 10l7-3 8 8M5 1.500l4 15" stroke="#6d94c0"/><path d="M6 14l9-12" stroke="#6b3f20" stroke-width="2.2"/><path d="M3 14l3-3 2 3z" fill="#c23b32"/>',
  dash: '<path d="M2 4.500h14M2 8h14M2 11.500h14M2 15h14" stroke="#d51f3d" stroke-width="1.5" stroke-dasharray="1.6 .7"/>',
  cadbox: '<rect x="2.5" y="4" width="13" height="12" fill="none" stroke="#999"/><path d="M2.500 8h13M9 5v5" stroke="#999"/>',
  cadlines: '<path d="M2 3l14 6M3 11l13-3M7 3l7 14" stroke="#aaa" stroke-width="1.3"/>',
  cadang: '<path d="M2 5l14 4M6 3L4 16M8 9h6" stroke="#aaa" stroke-width="1.3"/>',
  cadgear: '<circle cx="8" cy="8" r="5.5" fill="none" stroke="#999" stroke-width="3" stroke-dasharray="2 2"/><circle cx="8" cy="8" r="4.5" fill="#aaa"/><path d="M11 13l5 3" stroke="#888" stroke-width="1.5"/>',
  cadpt: '<path d="M3 1l5 8" stroke="#aaa" stroke-width="1.3"/><rect x="6" y="7" width="9" height="9" fill="#ddd"/>',
  addsq: '<rect x="2.5" y="2.5" width="11" height="11" fill="#fff" stroke="#777"/><circle cx="13.5" cy="13.5" r="2.5" fill="#fff" stroke="#5a9a4a" stroke-width="1.3"/>',
  funnel: '<path d="M1.500 3h15L11 10v7H7v-7z" fill="#4f82ba"/><rect x="1.5" y="2" width="15" height="2.5" fill="#d7cc55"/>',
  collapse: '<rect x="2" y="6" width="9" height="10" fill="#fff" stroke="#999"/><rect x="4" y="9" width="2.5" height="2.5" fill="#e8a53a"/><rect x="4" y="13" width="2.5" height="2.5" fill="#e8a53a"/><path d="M11 1.500l4.500 5H13V16H9V6.500H6.500z" fill="#3e76b5"/>',
  expand: '<rect x="2" y="2" width="9" height="11" fill="#fff" stroke="#999"/><rect x="4" y="4" width="2.5" height="2.5" fill="#e8a53a"/><rect x="4" y="8" width="2.5" height="2.5" fill="#e8a53a"/><path d="M11 16.500l4.500-5H13V2H9v9.500H6.500z" fill="#3e76b5"/>',
  info: '<circle cx="9" cy="9" r="7" fill="#5e88bb"/><text x="9" y="13" font-size="11" font-weight="700" font-style="italic" text-anchor="middle" font-family="Liberation Serif" fill="#fff">i</text>',
  styles: '<path d="M1.500 12l9-6 3 4-8 6z" fill="#d6593f"/><path d="M10 6l7-5-4 9z" fill="#e3c23a"/><path d="M3 8l5 5" stroke="#e7a43a" stroke-width="1.5"/>',
  addgroup: '<rect x="4" y="3" width="8" height="12" fill="#eee" stroke="#777"/><path d="M6 1.500h2v9H6zM9 1.500h2v9H9z" fill="#ccc" stroke="#777" stroke-width=".6"/><circle cx="14" cy="14" r="3" fill="#fff" stroke="#5a9a4a"/><path d="M12.500 14h3M14 12.500v3" stroke="#5a9a4a"/>',
  eye: '<path d="M1 8.500C4 4 13 4 17 8.500 13 13 4 13 1 8.500z" fill="#d8dfe7" stroke="#9aa6b3"/><circle cx="9" cy="8.5" r="3.3" fill="#4f6f93"/><circle cx="9" cy="8.5" r="1.3" fill="#1e2c3c"/><path d="M13 14l2 2 2-2z" fill="#333"/>',
  epsilon: '<text x="6" y="11" font-size="13" font-family="Liberation Serif" text-anchor="middle" fill="#444">ε</text><path d="M10 11h6v5h-6zM12 11v5M14 11v5" fill="none" stroke="#888" stroke-width=".8"/>',
  remove: '<rect x="2.5" y="2.5" width="11" height="11" fill="#fff" stroke="#777"/><rect x="10.5" y="11" width="6.5" height="4.5" rx="2" fill="#fff" stroke="#d33"/><path d="M12 13.300h3.500" stroke="#d33"/>',
  procmodel: '<circle cx="6" cy="6" r="3.5" fill="none" stroke="#c71f2a" stroke-width="2.4" stroke-dasharray="1.5 1.25"/><circle cx="6" cy="6" r="3" fill="#c71f2a"/><circle cx="12.5" cy="12" r="2.6" fill="none" stroke="#7f8b96" stroke-width="2" stroke-dasharray="1.2 1"/><circle cx="12.5" cy="12" r="2" fill="#7f8b96"/>',
  doc: page + '<path d="M6 6h6M6 9h6M6 12h6" stroke="#888"/>',
  tag: '<path d="M2 2h11v7l-4 6-7-4z" fill="#f5d84a" stroke="#d4b62f"/><path d="M9 15l5-5-1-1" stroke="#777" fill="none"/>',
  wrench: '<path d="M3 2c2-1 4 .5 3.500 3L16 14.500 14 16.500 5 7c-2 .5-4-1.500-3-3.500l2 1.500 1-1z" fill="#ccc" stroke="#666" stroke-width=".7"/><path d="M9 9.500l6 6" stroke="#c9a33a" stroke-width="2.4"/>',
  star: '<path d="M9 1l2.400 5.300 5.800.6-4.400 3.900 1.300 5.700L9 13.600l-5.100 2.900 1.300-5.700L.8 6.900l5.800-.6z" fill="#f8ee6a" stroke="#d9b72c" stroke-width=".9"/>',
  prjhome: '<rect x="2" y="3" width="14" height="12" fill="#d7e8c2" stroke="#9aa86e"/><path d="M2 3h14L8 15H2z" fill="#74c25a"/><circle cx="10" cy="8" r="2" fill="#1a8a2f"/>',
  home: '<path d="M2.500 4.500h4l1 1.500h8v10h-13z" fill="#f5f5f5" stroke="#999"/><path d="M5.500 11L9 8l3.500 3M6.500 10.500V14h5v-3.500" fill="none" stroke="#444"/>',
  folder: '<path d="M2.500 3.500h4L8 5h7.500v11h-13z" fill="#efefef" stroke="#aaa"/>',
  elephant: '<path d="M2 3c3-2 11-2 14 0 1 3 0 6-2 7l-1 3c-1 3-4 4-4 1s-5 1-6-4C1 7 1 5 2 3z" fill="#4f7aa8" stroke="#2f5a88" stroke-width=".6"/><circle cx="12" cy="5" r=".9" fill="#fff"/>',
  mssql: '<path d="M2 1.500c5 1 12 4 14 6.500-3 3-9 6-14 8.500 1.500-5 1.500-10 0-15z" fill="#6b94c0" stroke="#335f8f" stroke-width=".6"/><path d="M6 3c1 4 1 8 0 11M10 5c.7 3 .7 6 0 8" stroke="#dbe5f0" fill="none" stroke-width=".6"/>',
  oracle: '<rect x="1.5" y="4" width="15" height="10" rx="4.5" fill="#7d9fc7" stroke="#23456c" stroke-width="1.3"/>',
  db2: '<rect x="1" y="1.5" width="16" height="15" rx="2" fill="#7ea3cf"/><text x="9" y="11.3" font-size="6.5" text-anchor="middle" font-family="Liberation Sans" fill="#e9f0f8">DB2</text>',
  wms: '<circle cx="9" cy="9" r="7.5" fill="#a9bdd4" stroke="#6d8aab"/><path d="M4 5l4-1 1 3-3 3-2-2zM10 3l4 2-1 3-3-1zM10 10l4-1-1 4-3 2z" fill="#fff"/>',
  grid: '<rect x="2.5" y="2.5" width="13" height="13" fill="#4d6a88"/><path d="M2.500 6.700h13M2.500 11h13M6.800 2.500v13M11.200 2.500v13" stroke="#fff" stroke-width="1.2"/>',
  q: '<path d="M9.500 9.500l6 6" stroke="#6fa03c" stroke-width="3.2" stroke-linecap="round"/><circle cx="8.5" cy="8" r="6" fill="#fff" stroke="#6fa03c" stroke-width="2.8"/><circle cx="8.5" cy="8" r="2.8" fill="#fff" stroke="#e9a23b" stroke-width="1.4"/><path d="M8 8.500l5 5" stroke="#6fa03c" stroke-width="2.2"/>',
  gdal: '<circle cx="10" cy="8" r="5" fill="#6d94ba"/><path d="M3 1l7 6" stroke="#333" stroke-width="1.1"/><path d="M5 6c2-2 8-2 10 0" fill="none" stroke="#2f5a88"/><text x="9" y="17" font-size="6.6" font-weight="700" text-anchor="middle" font-family="Liberation Sans" fill="#111">GDAL</text>',
  wave: '<path d="M1 10l3.500-4L9 12l4-6 4 3.500" fill="none" stroke="#d7a23a" stroke-width="1.5"/>',
  grass: '<path d="M9 1.500L15 8l-6 6.500L3 8z" fill="#fff" stroke="#999"/><path d="M9 13V6M9 12L5 8M9 12l4-4M9 11L6 5.500M9 11l3-5.500" stroke="#4fa24a" stroke-width="1.1"/><path d="M4 16h10" stroke="#555"/>',
  saga: '<circle cx="9" cy="9" r="7.5" fill="#fff" stroke="#1f5d9e" stroke-width="1.7"/><path d="M2 8h9l4 6M5 3.500l10 6" fill="none" stroke="#1f5d9e" stroke-width="1.5"/>',
  shapes: '<path d="M9 .8l2.700 5.300 5.700.8-3.900 4.200 1 5.900L9 14.400l-5.500 2.600 1-5.900L.6 6.900l5.700-.8z" fill="#1e6aad" stroke="#1e6aad" stroke-linejoin="round"/>',
  coordtoggle: '<path d="M4 2l8 12M12 2L4 14" stroke="#444" stroke-width="2"/><circle cx="12" cy="13" r="3.5" fill="#fff" stroke="#444" stroke-width="1.5"/>',
  lock: '<path d="M5 8V5.500a4 4 0 018 0V8" fill="none" stroke="#777" stroke-width="1.8"/><rect x="3.5" y="8" width="11" height="9" rx="1" fill="#777"/>',
  crs: '<circle cx="9" cy="9" r="6.5" fill="#ddd" stroke="#666"/><path d="M9 2.500c-3 3-3 10 0 13M9 2.500c3 3 3 10 0 13M2.500 9h13M3.500 5.500h11M3.500 12.500h11" stroke="#666" stroke-width=".7" fill="none"/>',
  bubble: '<ellipse cx="9" cy="8" rx="7.5" ry="7" fill="#6f6f6f"/><path d="M6 13l-1 4 5-3z" fill="#6f6f6f"/><circle cx="5.5" cy="8" r="1" fill="#fff"/><circle cx="9" cy="8" r="1" fill="#fff"/><circle cx="12.5" cy="8" r="1" fill="#fff"/>'
}

const svgIcon = (name, size = 18) => `<svg xmlns="http://www.w3.org/2000/svg" viewBox="0 0 18 18" width="${size}" height="${size}" style="display:block;overflow:visible">${ICONS[name] || ''}</svg>`
const DOTS = 'radial-gradient(circle, #b5b5b5 .7px, transparent .8px)'

class QTitlebar extends HTMLElement {
  connectedCallback () {
    this.attachShadow({ mode: 'open' }).innerHTML = `
      <style>
        :host { display: flex; align-items: center; height: 23px; background: #a5a5a5; color: #111; flex: none; }
        .logo { margin-left: 3px; width: 18px; }
        .text { margin-left: 2px; flex: 1; letter-spacing: -.28px; }
        .btn { width: 45px; height: 23px; display: flex; align-items: center; justify-content: center; }
      </style>
      <div class="logo">${svgIcon('q', 17)}</div>
      <div class="text"><slot></slot></div>
      <div class="btn"><svg width="12" height="12"><path d="M1 6.500h10" stroke="#111"/></svg></div>
      <div class="btn"><svg width="12" height="12"><path d="M.5 3.500h8v8h-8zM3 3.500V.5h8.500v8H8.500" fill="none" stroke="#111"/></svg></div>
      <div class="btn"><svg width="12" height="12"><path d="M1 1l10 10M11 1L1 11" stroke="#111"/></svg></div>`
  }
}
customElements.define('q-titlebar', QTitlebar)

class QMenubar extends HTMLElement {
  connectedCallback () {
    this.attachShadow({ mode: 'open' }).innerHTML = `
      <style>
        :host { display: flex; align-items: center; height: 19px; padding-left: 10px; gap: 13px; background: #efefef; flex: none; border-bottom: 1px solid #d5d5d5; box-sizing: content-box; letter-spacing: -.05px; }
      </style>
      <slot></slot>`
  }
}
customElements.define('q-menubar', QMenubar)

class QToolbar extends HTMLElement {
  connectedCallback () {
    const widths = { grip: 3, sep: 1, drop: 8, dropb: 11 }
    let right = 0
    const html = this.getAttribute('items').split(' ').map((spec) => {
      const [raw, at] = spec.split('@')
      const active = raw.endsWith('*')
      const off = raw.endsWith('!')
      const name = raw.replace(/[*!]$/, '')
      const w = active ? 23 : (widths[name] || 18)
      const ml = Number(at) - w / 2 - right
      right = Number(at) + w / 2
      const style = `margin-left:${ml}px;width:${w}px`
      if (name === 'grip') return `<i class="grip" style="${style}"></i>`
      if (name === 'sep') return `<i class="sep" style="${style}"></i>`
      if (name === 'drop') return `<i class="drop" style="${style}"></i>`
      if (name === 'dropb') return `<i class="dropb" style="${style}"></i>`
      return `<b class="${active ? 'btn on' : off ? 'btn off' : 'btn'}" style="${style}">${svgIcon(name)}</b>`
    }).join('')
    this.attachShadow({ mode: 'open' }).innerHTML = `
      <style>
        :host { display: flex; align-items: center; height: 30px; flex: none; border-bottom: 1px solid #b5b5b5; background: linear-gradient(#fbfbfb, #efefef); }
        :host([flat]) { height: 26px; border: 0; background: none; }
        .btn { display: flex; align-items: center; justify-content: center; height: 23px; flex: none; box-sizing: border-box; }
        .off { opacity: .38; filter: grayscale(1); }
        .on { background: #dfdfdf; border: 1px solid #b3b3b3; border-radius: 2px; height: 23px; }
        .grip { height: 22px; flex: none; background: ${DOTS} 0 0 / 3px 3px; }
        .sep { height: 22px; flex: none; background: #dcdcdc; }
        .drop { height: 0; flex: none; border: 4px solid transparent; border-top: 4px solid #555; border-bottom: 0; box-sizing: border-box; }
        .dropb { height: 23px; flex: none; box-sizing: border-box; background: #dfdfdf; border: 1px solid #b3b3b3; border-radius: 2px; position: relative; }
        .dropb::after { content: ""; position: absolute; left: 1px; top: 9px; border: 4px solid transparent; border-top-color: #444; border-bottom: 0; }
      </style>${html}`
  }
}
customElements.define('q-toolbar', QToolbar)

class QDockTitle extends HTMLElement {
  connectedCallback () {
    const pair = (x) => `<svg width="11" height="11" viewBox="0 0 11 11" style="flex:none"><rect x=".5" y=".5" width="10" height="10" rx="1.5" fill="#ececec" stroke="#777"/>${x}</svg>`
    this.attachShadow({ mode: 'open' }).innerHTML = `
      <style>
        :host { display: flex; height: 22px; padding: 0 0 0 4px; gap: 4px; align-items: flex-start; line-height: 20px; flex: none; color: #222; }
        .t { flex: 1; }
        svg { margin-top: 5px; }
      </style>
      <div class="t"><slot></slot></div>
      ${pair('<path d="M2.500 5h4v4h-4zM4.500 5V2.500h4v4h-2" fill="none" stroke="#555"/>')}
      ${pair('<path d="M3 3l5 5M8 3L3 8" stroke="#333" stroke-width="1.6"/>')}`
  }
}
customElements.define('q-dock-title', QDockTitle)

class QMessage extends HTMLElement {
  connectedCallback () {
    this.attachShadow({ mode: 'open' }).innerHTML = `
      <style>
        :host { display: flex; height: 198px; padding-top: 4px; align-items: center; justify-content: center; flex: none; color: #111; font-size: 11px; letter-spacing: 0; }
      </style>
      <slot></slot>`
  }
}
customElements.define('q-message', QMessage)

class QHandle extends HTMLElement {
  connectedCallback () {
    const h = this.getAttribute('h') || 4
    this.attachShadow({ mode: 'open' }).innerHTML = `
      <style>
        :host { display: flex; justify-content: center; align-items: center; height: ${h}px; flex: none; }
        i { width: 18px; height: 3px; background: ${DOTS} 0 0 / 3px 3px; }
      </style>
      <i></i>`
  }
}
customElements.define('q-handle', QHandle)

class QVhandle extends HTMLElement {
  connectedCallback () {
    this.attachShadow({ mode: 'open' }).innerHTML = `
      <style>
        :host { display: flex; width: 7px; align-items: center; justify-content: center; flex: none; }
        i { width: 3px; height: 18px; background: ${DOTS} 0 0 / 3px 3px; }
      </style>
      <i></i>`
  }
}
customElements.define('q-vhandle', QVhandle)

class QTree extends HTMLElement {
  connectedCallback () {
    const top = Number(this.getAttribute('thumb-top')) || 0
    const h = Number(this.getAttribute('thumb-height')) || 0
    const dark = this.getAttribute('thumb-tone') === 'dark'
    const arrow = (dir) => `<div class="arr"><svg width="9" height="5"><path d="${dir === 'up' ? 'M0 5l4.500-5L9 5z' : 'M0 0l4.500 5L9 0z'}" fill="#555"/></svg></div>`
    const bar = this.hasAttribute('noscroll') ? '' : `
      <div class="bar">
        ${arrow('up')}
        <div class="track"><div class="thumb" style="top:${top - 14}px;height:${h}px;background:${dark ? '#cdcdcd' : '#d8d8d8'}"></div></div>
        ${arrow('down')}
      </div>`
    this.attachShadow({ mode: 'open' }).innerHTML = `
      <style>
        :host { display: flex; flex: none; box-sizing: border-box; border: 1px solid #a8a8a8; background: #fff; overflow: hidden; }
        .rows { flex: 1; min-width: 0; overflow: hidden; }
        .bar { width: 14px; display: flex; flex-direction: column; border-left: 1px solid #e3e3e3; background: #f4f4f4; flex: none; }
        .arr { height: 14px; display: flex; align-items: center; justify-content: center; background: #f4f4f4; flex: none; }
        .track { flex: 1; position: relative; }
        .thumb { position: absolute; left: 0; right: 0; }
      </style>
      <div class="rows"><slot></slot></div>${bar}`
  }
}
customElements.define('q-tree', QTree)

const ARROWS = {
  right: '<svg width="6" height="9" style="display:block"><path d="M0 0l5.500 4.500L0 9z" fill="#555"/></svg>',
  down: '<svg width="9" height="6" style="display:block"><path d="M0 0h9L4.500 5.500z" fill="#555"/></svg>'
}

class QRow extends HTMLElement {
  connectedCallback () {
    const h = this.getAttribute('h') || 18
    const pad = Number(this.getAttribute('pad') || 11)
    const text = Number(this.getAttribute('text') || 46)
    const name = this.getAttribute('icon')
    const arrow = this.getAttribute('arrow')
    const iconX = name === 'gear' || name === 'gearsel' ? pad : pad + 21
    this.attachShadow({ mode: 'open' }).innerHTML = `
      <style>
        :host { display: block; position: relative; height: ${h}px; line-height: ${h}px; white-space: nowrap; color: #222; }
        :host([selected]) { background: #f0f0f0; }
        .arrow { position: absolute; left: ${pad - 4}px; top: 50%; transform: translateY(-50%); }
        .icon { position: absolute; left: ${iconX - 9}px; top: 0; bottom: 0; display: flex; align-items: center; }
        .text { margin-left: ${text}px; }
      </style>
      ${arrow ? `<div class="arrow">${ARROWS[arrow]}</div>` : ''}
      ${name ? `<div class="icon">${svgIcon(name)}</div>` : ''}
      <div class="text"><slot></slot></div>`
  }
}
customElements.define('q-row', QRow)

class QLayer extends HTMLElement {
  connectedCallback () {
    const on = this.hasAttribute('on')
    let symbol = ''
    if (this.hasAttribute('swatch')) symbol = `<i class="sw" style="background:${this.getAttribute('swatch')}"></i>`
    if (this.hasAttribute('line')) symbol = `<i class="ln" style="background:${this.getAttribute('line')}"></i>`
    if (this.hasAttribute('raster')) symbol = '<svg width="14" height="14" viewBox="0 0 14 14"><path d="M0 0h5v5H0zM9 0h5v5H9zM5 5h4v4H5zM0 9h5v5H0z" fill="#1f2f4a"/><path d="M5 0h4v5H5zM9 9h5v5H9z" fill="#8ea3bd"/><path d="M0 5h5v4H0zM9 5h5v4H9z" fill="#d4dce5"/></svg>'
    if (this.hasAttribute('current')) symbol = '<svg width="18" height="16" viewBox="0 0 18 16"><path d="M0 9h17" stroke="#b8d0a8"/><path d="M5 14L12 1l3 2-7 12z" fill="#8fa67d"/></svg>'
    this.attachShadow({ mode: 'open' }).innerHTML = `
      <style>
        :host { display: flex; align-items: center; height: 18px; white-space: nowrap; position: relative; }
        :host([selected]) { background: #f0f0f0; }
        .exp { position: absolute; left: 7px; top: 7px; }
        .cb { margin-left: 24px; width: 12px; height: 12px; border: 1px solid #bbb; background: #fff; flex: none; display: flex; align-items: center; justify-content: center; }
        .sym { margin-left: 5px; width: 18px; height: 18px; display: flex; align-items: center; justify-content: center; flex: none; }
        .sw { width: 15px; height: 15px; border: 1px solid #8a8a8a; display: block; }
        .ln { width: 16px; height: 1.5px; display: block; }
        .t { margin-left: 4px; color: #777; font-style: italic; font-size: 12.5px; letter-spacing: .16px; }
        .t.on { color: #000; font-style: normal; font-weight: 700; font-size: 12px; letter-spacing: 0; }
        .t.cur { text-decoration: underline; letter-spacing: .35px; }
        .ind { position: absolute; right: 5px; top: 3px; }
      </style>
      ${this.hasAttribute('expanded') ? `<div class="exp">${ARROWS.down}</div>` : ''}
      <div class="cb">${on ? '<svg width="10" height="10"><path d="M1.500 5L4 9 8.500.5" fill="none" stroke="#111" stroke-width="1.8"/></svg>' : ''}</div>
      <div class="sym">${symbol}</div>
      <div class="t ${on ? 'on' : ''} ${this.hasAttribute('current') ? 'cur' : ''}"><slot></slot></div>
      ${this.hasAttribute('indicator') ? '<svg class="ind" width="14" height="12" viewBox="0 0 14 12"><rect x="1" y="3" width="12" height="6" rx="1" fill="#eef1f5" stroke="#8d97a3"/><path d="M3 1v2M5.500 1v2M8 1v2M10.500 1v2M3 9v2M5.500 9v2M8 9v2M10.500 9v2" stroke="#8d97a3"/></svg>' : ''}`
  }
}
customElements.define('q-layer', QLayer)

class QSearch extends HTMLElement {
  connectedCallback () {
    this.attachShadow({ mode: 'open' }).innerHTML = `
      <style>
        :host { display: flex; align-items: center; height: 21px; margin: 3px 0 1px 0; width: 278px; box-sizing: border-box; border: 1px solid #a8a8a8; background: #fff; color: #a8a8a8; font-style: italic; flex: none; }
        svg { margin: 0 7px 0 7px; }
      </style>
      <svg width="14" height="14"><circle cx="6" cy="6" r="4.500" fill="none" stroke="#777" stroke-width="1.1"/><path d="M9.500 9.500l4 4" stroke="#777" stroke-width="1.3"/></svg>
      <slot></slot>`
  }
}
customElements.define('q-search', QSearch)

class QMap extends HTMLElement {
  connectedCallback () {
    // hatch centres, running down the river line from the top of the canvas
    const c = [[1083, 165], [1068, 190], [1050, 216], [1032, 244], [1015, 272], [996, 300], [977, 327], [960, 353], [945, 380], [924, 410], [910, 438], [895, 468], [884, 500], [878, 530], [870, 563], [871, 595], [874, 627], [882, 660], [890, 692], [904, 720], [920, 748], [937, 776], [954, 805], [972, 830], [994, 857], [1014, 879], [1038, 904], [1060, 928], [1081, 952], [1104, 976], [1126, 1000], [1148, 1023], [1170, 1047]]
    const line = c.map((p) => p.join(',')).join(' ') + ' 1175,1053'
    let hatches = ''
    let selected = ''
    c.forEach((p, i) => {
      const a = c[Math.max(i - 1, 0)]
      const b = c[Math.min(i + 1, c.length - 1)]
      const dx = b[0] - a[0]
      const dy = b[1] - a[1]
      const len = Math.hypot(dx, dy)
      const half = i < 11 ? 30 : i < 14 ? 27 : i < 24 ? 26 : 25
      const nx = -dy / len * half
      const ny = dx / len * half
      if (i === 14) {
        selected = '<path d="M843 558L897 568" stroke="#f7ee5c" stroke-width="2"/>' + [[843, 558], [870, 563], [897, 568]].map(([x, y]) => `<path d="M${x - 3.5} ${y - 3.5}l7 7m0-7l-7 7" stroke="#e2573c" stroke-width="1.2"/>`).join('')
      } else {
        hatches += `<line x1="${p[0] + nx}" y1="${p[1] + ny}" x2="${p[0] - nx}" y2="${p[1] - ny}"/>`
      }
    })
    this.attachShadow({ mode: 'open' }).innerHTML = `
      <style>
        :host { display: block; width: 1126px; height: 885px; margin-top: 1px; border: 1px solid #a8a8a8; box-sizing: border-box; background: #fff; flex: none; overflow: hidden; }
        svg { display: block; }
      </style>
      <svg width="1124" height="883" viewBox="509 168 1124 883">
        <g stroke="#9b9b9b" stroke-width="1.1">${hatches}</g>
        <polyline points="${line}" fill="none" stroke="#a6c596" stroke-width="1.4"/>
        ${selected}
      </svg>`
  }
}
customElements.define('q-map', QMap)

class QStatusbar extends HTMLElement {
  connectedCallback () {
    const spin = '<span class="spin"><svg width="8" height="5"><path d="M0 5l4-5 4 5z" fill="#666"/></svg><svg width="8" height="5"><path d="M0 0l4 5 4-5z" fill="#666"/></svg></span>'
    this.attachShadow({ mode: 'open' }).innerHTML = `
      <style>
        :host { display: flex; align-items: center; height: 27px; padding-top: 1px; flex: none; background: #f0f0f0; font-size: 11px; letter-spacing: 0; color: #222; white-space: nowrap; }
        .box { display: flex; align-items: center; height: 21px; box-sizing: border-box; border: 1px solid #adadad; background: #fff; padding-left: 5px; flex: none; position: relative; }
        .spin { position: absolute; right: 3px; top: 3px; display: flex; flex-direction: column; gap: 2px; }
        .combo { position: absolute; right: 0; top: 0; bottom: 0; width: 19px; border-left: 1px solid #ddd; display: flex; align-items: center; justify-content: center; }
        .l { flex: none; }
      </style>
      <div class="box" style="margin-left:4px;width:200px;color:#777;padding-left:8px;gap:6px"><svg width="14" height="14"><circle cx="6" cy="6" r="4.500" fill="none" stroke="#777" stroke-width="1.1"/><path d="M9.500 9.500l4 4" stroke="#777" stroke-width="1.3"/></svg>Type to locate (Ctrl+K)</div>
      <div class="l" style="margin-left:9px;width:894px">1 feature(s) selected on layer Geometric Attributes.</div>
      <div class="l" style="width:57px">Coordinate</div>
      <div class="box" style="width:104px">70100.6,250784.8</div>
      <div class="l" style="margin-left:3px;width:16px">${svgIcon('coordtoggle', 16)}</div>
      <div class="l" style="margin-left:14px;width:29px">Scale</div>
      <div class="box" style="width:79px">1:1155<span class="combo"><svg width="8" height="5"><path d="M0 0l4 5 4-5z" fill="#666"/></svg></span></div>
      <div class="l" style="margin-left:12px;width:16px">${svgIcon('lock', 16)}</div>
      <div class="l" style="margin-left:6px;width:48px">Magnifier</div>
      <div class="box" style="width:87px">100%${spin}</div>
      <div class="l" style="margin-left:9px;width:52px">Rotation</div>
      <div class="box" style="width:82px">0.0 °${spin}</div>
      <div class="box" style="margin-left:7px;width:12px;height:12px;padding:0;justify-content:center"><svg width="10" height="10"><path d="M1.500 5L4 9 8.500.5" fill="none" stroke="#111" stroke-width="1.8"/></svg></div>
      <div class="l" style="margin-left:6px;width:53px">Render</div>
      <div class="l" style="width:16px">${svgIcon('crs', 16)}</div>
      <div class="l" style="margin-left:3px;width:79px">EPSG:31254</div>
      <div class="l">${svgIcon('bubble', 17)}</div>`
  }
}
customElements.define('q-statusbar', QStatusbar)
</script>
</body>
</html>
